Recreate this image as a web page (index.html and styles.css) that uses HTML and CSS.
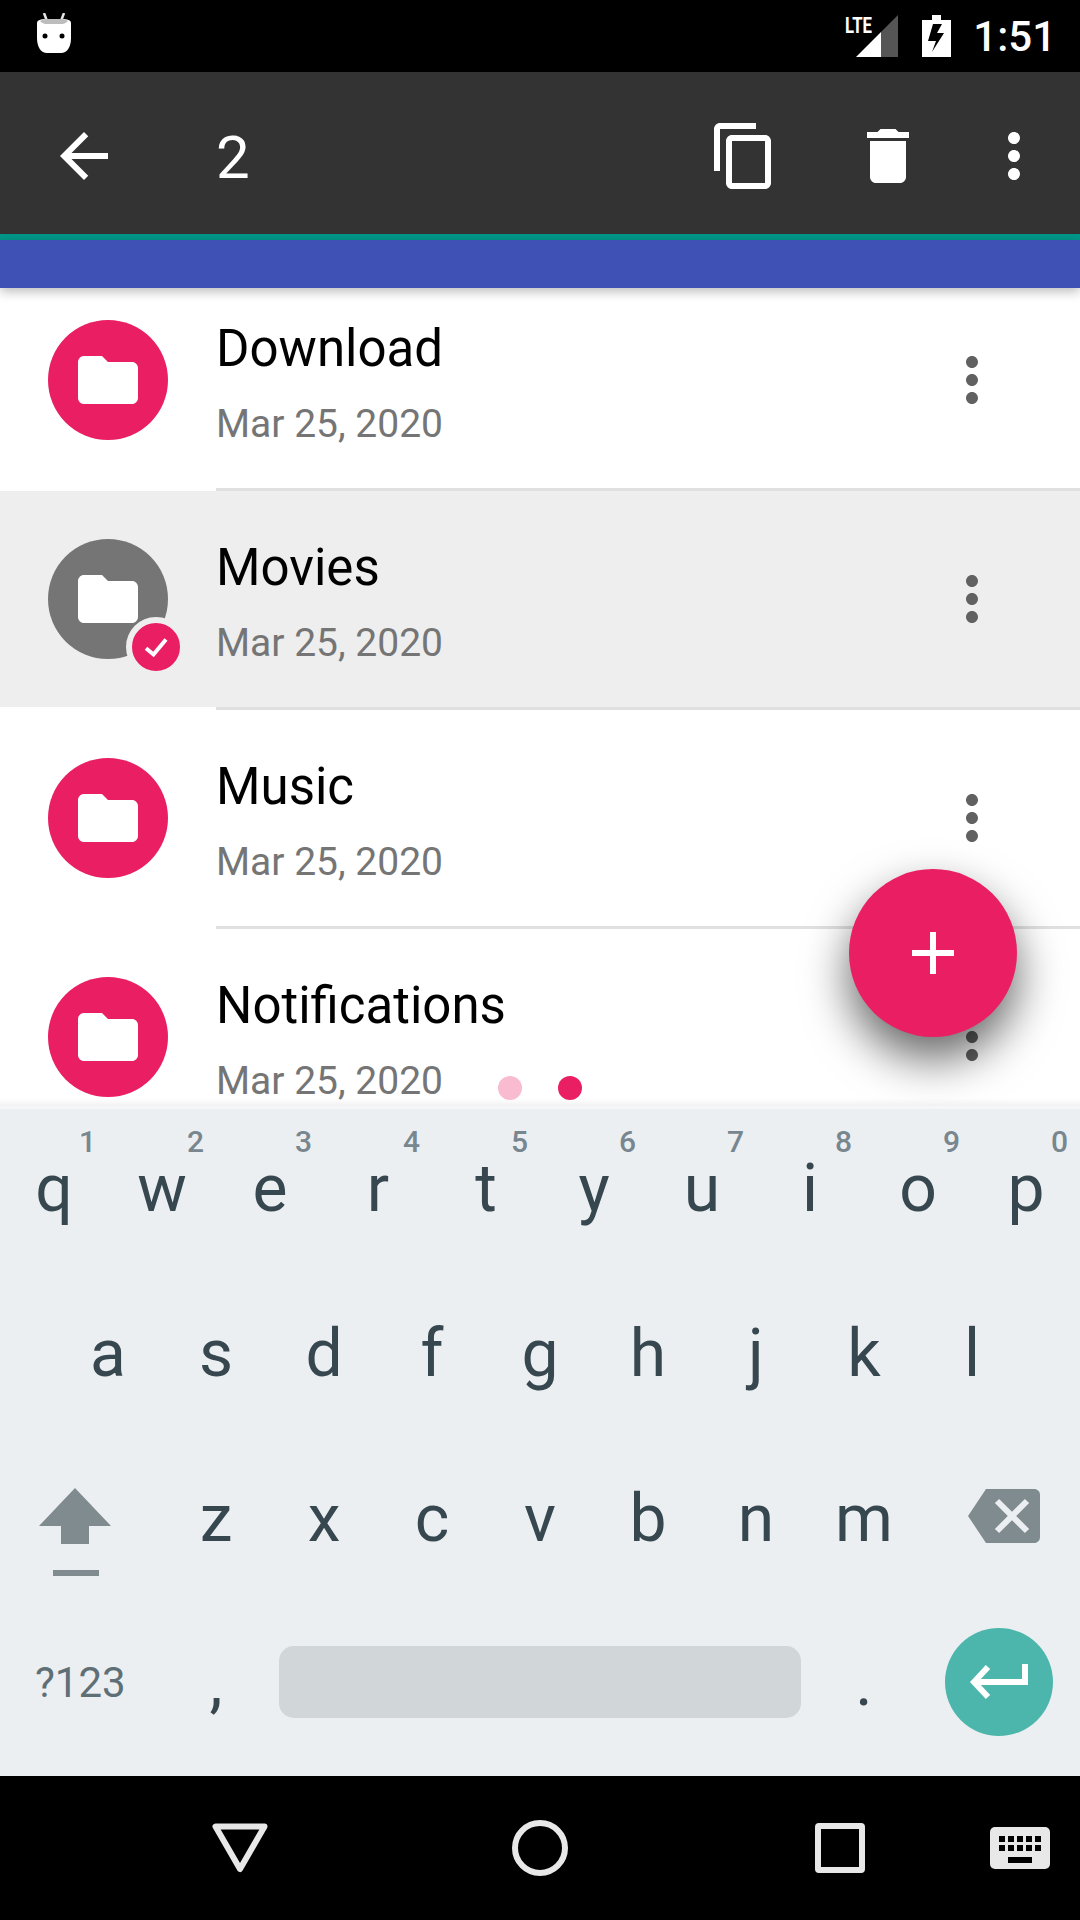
FILE: index.html
```html
<!DOCTYPE html>
<html lang="en">
<head>
<meta charset="utf-8">
<title>Files</title>
<link rel="stylesheet" href="styles.css">
</head>
<body>
<svg class="defs" xmlns="http://www.w3.org/2000/svg">
  <symbol id="folder" viewBox="0 0 24 24"><path d="M10 4H4c-1.1 0-2 .9-2 2v12c0 1.1.9 2 2 2h16c1.1 0 2-.9 2-2V8c0-1.1-.9-2-2-2h-8l-2-2z"/></symbol>
  <symbol id="more" viewBox="0 0 24 24"><path d="M12 8c1.1 0 2-.9 2-2s-.9-2-2-2-2 .9-2 2 .9 2 2 2zm0 2c-1.1 0-2 .9-2 2s.9 2 2 2 2-.9 2-2-.9-2-2-2zm0 6c-1.1 0-2 .9-2 2s.9 2 2 2 2-.9 2-2-.9-2-2-2z"/></symbol>
</svg>
<div class="screen">
  <header class="statusbar">
    <svg class="robot" viewBox="0 0 34 40" width="34" height="40">
      <path class="robot-ant" d="M7 0l3 8M27 0l-3 8"/>
      <path class="robot-body" d="M9 6h16c5 0 9 1 9 4v15c0 9-4 15-10 15H10C4 40 0 34 0 25V10c0-3 4-4 9-4z"/>
      <path class="robot-top" d="M3 8c2-1.500 5-2 7-2h14c2 0 5 .5 7 2-2 2.500-5 3-7 3H10c-2 0-5-.5-7-3z"/>
      <circle class="robot-eye" cx="8" cy="23" r="2.500"/>
      <circle class="robot-eye" cx="25" cy="23" r="2.500"/>
    </svg>
    <div class="status-right">
      <svg class="signal" viewBox="0 0 54 42" width="54" height="42">
        <path class="sig-on" d="M0 42L25 17V42z"/>
        <path class="sig-off" d="M25 17L42 0V42H25z"/>
        <text class="lte" x="-11" y="18" textLength="27" lengthAdjust="spacingAndGlyphs">LTE</text>
      </svg>
      <svg class="battery" viewBox="0 0 29 42" width="29" height="42">
        <path class="batt" d="M10 0h9v5h10v37H0V5h10z"/>
        <path class="bolt" d="M11 9h9l-5 9h7L10 37l4-11H6z"/>
      </svg>
      <span class="clock">1:51</span>
    </div>
  </header>

  <div class="actionbar">
    <svg class="ab-icon ab-back" viewBox="0 0 24 24"><path d="M20 11H7.830l5.590-5.590L12 4l-8 8 8 8 1.410-1.410L7.830 13H20v-2z"/></svg>
    <span class="ab-count">2</span>
    <svg class="ab-icon ab-copy" viewBox="0 0 24 24"><path d="M16 1H4c-1.100 0-2 .9-2 2v14h2V3h12V1zm3 4H8c-1.100 0-2 .9-2 2v14c0 1.100.9 2 2 2h11c1.100 0 2-.9 2-2V7c0-1.100-.9-2-2-2zm0 16H8V7h11v14z"/></svg>
    <svg class="ab-icon ab-trash" viewBox="0 0 24 24"><path d="M6 19c0 1.100.9 2 2 2h8c1.100 0 2-.9 2-2V7H6v12zM19 4h-3.500l-1-1h-5l-1 1H5v2h14V4z"/></svg>
    <svg class="ab-icon ab-more"><use href="#more"/></svg>
  </div>
  <div class="bluebar"></div>

  <main class="list">
    <div class="row">
      <div class="row-body">
        <div class="avatar"><svg class="folder"><use href="#folder"/></svg></div>
        <div class="row-text"><div class="title">Download</div><div class="date">Mar 25, 2020</div></div>
        <svg class="row-more"><use href="#more"/></svg>
      </div>
      <div class="divider"></div>
    </div>
    <div class="row">
      <div class="row-body selected">
        <div class="avatar avatar-sel">
          <svg class="folder"><use href="#folder"/></svg>
          <span class="badge"><svg class="check" viewBox="0 0 24 24"><path d="M4 13l6 5L20 6"/></svg></span>
        </div>
        <div class="row-text"><div class="title">Movies</div><div class="date">Mar 25, 2020</div></div>
        <svg class="row-more"><use href="#more"/></svg>
      </div>
      <div class="divider"></div>
    </div>
    <div class="row">
      <div class="row-body">
        <div class="avatar"><svg class="folder"><use href="#folder"/></svg></div>
        <div class="row-text"><div class="title">Music</div><div class="date">Mar 25, 2020</div></div>
        <svg class="row-more"><use href="#more"/></svg>
      </div>
      <div class="divider"></div>
    </div>
    <div class="row">
      <div class="row-body">
        <div class="avatar"><svg class="folder"><use href="#folder"/></svg></div>
        <div class="row-text"><div class="title">Notifications</div><div class="date">Mar 25, 2020</div></div>
        <svg class="row-more"><use href="#more"/></svg>
      </div>
    </div>
    <div class="fade"></div>
  </main>

  <span class="dot dot-a"></span>
  <span class="dot dot-b"></span>
  <button class="fab"><svg class="plus" viewBox="0 0 42 42"><path d="M18 0h6v18h18v6H24v18h-6V24H0v-6h18z"/></svg></button>

  <section class="keyboard">
    <div class="kb-row kb-row1">
      <div class="key">q<sup class="hint">1</sup></div>
      <div class="key">w<sup class="hint">2</sup></div>
      <div class="key">e<sup class="hint">3</sup></div>
      <div class="key">r<sup class="hint">4</sup></div>
      <div class="key">t<sup class="hint">5</sup></div>
      <div class="key">y<sup class="hint">6</sup></div>
      <div class="key">u<sup class="hint">7</sup></div>
      <div class="key">i<sup class="hint">8</sup></div>
      <div class="key">o<sup class="hint">9</sup></div>
      <div class="key">p<sup class="hint">0</sup></div>
    </div>
    <div class="kb-row kb-row2">
      <div class="key">a</div><div class="key">s</div><div class="key">d</div><div class="key">f</div><div class="key">g</div><div class="key">h</div><div class="key">j</div><div class="key">k</div><div class="key">l</div>
    </div>
    <div class="kb-row kb-row3">
      <div class="key-wide">
        <svg class="shift" viewBox="0 0 72 88" width="72" height="88">
          <path class="kb-ico" d="M36 0l36 38H50v18H22V38H0z"/>
          <rect class="kb-line" x="14" y="82" width="46" height="6"/>
        </svg>
      </div>
      <div class="key">z</div><div class="key">x</div><div class="key">c</div><div class="key">v</div><div class="key">b</div><div class="key">n</div><div class="key">m</div>
      <div class="key-back">
        <svg class="backspace" viewBox="0 0 72 54" width="72" height="54">
          <path class="kb-ico" d="M18 0h48c3.500 0 6 2.500 6 6v42c0 3.500-2.500 6-6 6H18L0 27z"/>
          <path class="kb-x" d="M29 12l30 30M59 12L29 42"/>
        </svg>
      </div>
    </div>
    <div class="kb-row kb-row4">
      <div class="key-sym">?123</div>
      <div class="key">,</div>
      <div class="spacebar"></div>
      <div class="key">.</div>
      <div class="enter">
        <svg class="enter-ico" viewBox="0 0 58 36" width="58" height="36">
          <path d="M55 0v18H4M18 3L4 18l14 15"/>
        </svg>
      </div>
    </div>
  </section>

  <nav class="navbar">
    <div class="nav-slot">
      <svg viewBox="0 0 56 50" width="56" height="50"><path class="nav-stroke" d="M3.500 3.500h49L28 46z"/></svg>
    </div>
    <div class="nav-slot">
      <svg viewBox="0 0 56 56" width="56" height="56"><circle class="nav-stroke" cx="28" cy="28" r="25"/></svg>
    </div>
    <div class="nav-slot">
      <svg viewBox="0 0 50 50" width="50" height="50"><rect class="nav-stroke" x="3" y="3" width="44" height="44" rx="1"/></svg>
    </div>
    <div class="nav-kbd">
      <svg viewBox="0 0 60 42" width="60" height="42">
        <rect class="kbd-body" width="60" height="42" rx="5"/>
        <g class="kbd-keys">
          <rect x="9" y="9" width="6" height="6"/><rect x="18" y="9" width="6" height="6"/><rect x="27" y="9" width="6" height="6"/><rect x="36" y="9" width="6" height="6"/><rect x="45" y="9" width="6" height="6"/>
          <rect x="9" y="18" width="6" height="6"/><rect x="18" y="18" width="6" height="6"/><rect x="27" y="18" width="6" height="6"/><rect x="36" y="18" width="6" height="6"/><rect x="45" y="18" width="6" height="6"/>
          <rect x="18" y="30" width="24" height="6"/>
        </g>
      </svg>
    </div>
  </nav>
</div>
</body>
</html>
```
FILE: styles.css
```css
* { box-sizing: border-box; }
html, body { margin: 0; padding: 0; }
body { width: 1080px; height: 1920px; overflow: hidden; font-family: Roboto, "Liberation Sans", sans-serif; background: #fff; }
.defs { display: none; }
.screen { position: relative; width: 1080px; height: 1920px; display: flex; flex-direction: column; overflow: hidden; }

/* status bar */
.statusbar { flex: 0 0 72px; background: #000; display: flex; align-items: flex-start; justify-content: space-between; padding: 13px 24px 0 37px; }
.robot { display: block; }
.robot-ant { stroke: #e6e6e6; stroke-width: 2.500; fill: none; }
.robot-body { fill: #fff; }
.robot-top { fill: #bdbdbd; }
.robot-eye { fill: #000; }
.status-right { display: flex; align-items: flex-start; margin-top: 2px; }
.signal { display: block; overflow: visible; margin-right: 12px; }
.sig-on { fill: #fff; }
.sig-off { fill: #555; }
.lte { fill: #fff; font: 700 22px Roboto, sans-serif; }
.battery { display: block; margin-right: 22px; }
.batt { fill: #fff; }
.bolt { fill: #000; }
.clock { color: #fff; font-size: 42px; font-weight: 500; line-height: 42px; margin-top: 1px; }

/* action bar */
.actionbar { flex: 0 0 168px; background: #333; border-bottom: 6px solid #009688; display: flex; align-items: flex-start; padding: 48px 30px 0 48px; color: #fff; }
.ab-icon { width: 72px; height: 72px; fill: #fff; flex: none; display: block; }
.ab-count { font-size: 60px; line-height: 76px; margin-left: 96px; }
.ab-copy { margin-left: auto; }
.ab-trash { margin-left: 72px; }
.ab-more { margin-left: 54px; }
.bluebar { flex: 0 0 48px; background: #3f51b5; box-shadow: 0 4px 10px rgba(0,0,0,.25); position: relative; z-index: 2; }

/* list */
.list { flex: 1; min-height: 0; overflow: hidden; position: relative; background: #fff; }
.row:first-child { margin-top: -16px; }
.row-body { height: 216px; display: flex; align-items: center; padding-left: 48px; }
.selected { background: #eee; }
.divider { height: 3px; margin-left: 216px; background: #e0e0e0; }
.avatar { width: 120px; height: 120px; border-radius: 50%; background: #e91e63; position: relative; display: flex; align-items: center; justify-content: center; flex: none; }
.avatar-sel { background: #757575; }
.folder { width: 72px; height: 72px; fill: #fff; display: block; }
.badge { position: absolute; left: 78px; top: 78px; width: 60px; height: 60px; border-radius: 50%; background: #e91e63; border: 6px solid #eee; display: flex; align-items: center; justify-content: center; }
.check { width: 30px; height: 30px; fill: none; stroke: #fff; stroke-width: 3.200; }
.row-text { margin-left: 48px; flex: 1; padding-top: 6px; }
.title { font-size: 51px; line-height: 60px; color: #000; }
.date { font-size: 39px; line-height: 48px; color: #757575; margin-top: 21px; }
.row-more { width: 72px; height: 72px; fill: #616161; flex: none; margin-right: 72px; display: block; }
.fade { position: absolute; left: 0; right: 0; bottom: 0; height: 8px; background: linear-gradient(rgba(0,0,0,0), rgba(0,0,0,.05)); }

/* overlays */
.dot { position: absolute; width: 24px; height: 24px; border-radius: 50%; top: 1076px; z-index: 3; }
.dot-a { left: 498px; background: #f8bbd0; }
.dot-b { left: 558px; background: #e91e63; }
.fab { position: absolute; left: 849px; top: 869px; width: 168px; height: 168px; border-radius: 50%; border: 0; padding: 0; background: #e91e63; box-shadow: 0 22px 46px rgba(0,0,0,.6); display: flex; align-items: center; justify-content: center; z-index: 3; }
.plus { width: 42px; height: 42px; fill: #fff; display: block; }

/* keyboard */
.keyboard { flex: 0 0 670px; background: #eceff1; border-top: 3px solid #f4f6f8; position: relative; z-index: 4; }
.kb-row { display: flex; height: 165px; }
.kb-row1 { margin-top: -3px; }
.kb-row2 { padding-left: 54px; }
.kb-row4 { height: 162px; }
.key { width: 108px; flex: none; position: relative; display: flex; align-items: center; justify-content: center; font-size: 66px; color: #37474f; }
.hint { position: absolute; right: 12px; top: 18px; font-size: 30px; line-height: 36px; font-weight: 500; color: #78868f; vertical-align: baseline; }
.key-wide { width: 162px; flex: none; padding-left: 39px; padding-top: 52px; }
.shift { display: block; }
.kb-ico { fill: #7f8b8f; }
.kb-line { fill: #7f8b8f; }
.kb-x { stroke: #eceff1; stroke-width: 6; fill: none; }
.key-back { flex: none; padding-left: 50px; padding-top: 53px; }
.backspace { display: block; }
.key-sym { width: 162px; flex: none; display: flex; align-items: center; padding-left: 35px; font-size: 42px; color: #5f6f76; }
.spacebar { flex: none; width: 522px; height: 72px; align-self: center; margin: 0 9px; border-radius: 15px; background: #d1d6d9; }
.enter { flex: none; width: 108px; height: 108px; border-radius: 50%; align-self: center; margin-left: 27px; background: #4db6ac; display: flex; align-items: center; justify-content: center; }
.enter-ico { display: block; fill: none; stroke: #fff; stroke-width: 6; }

/* nav bar */
.navbar { flex: 0 0 144px; background: #000; display: flex; align-items: center; padding-left: 90px; }
.nav-slot { width: 300px; flex: none; display: flex; justify-content: center; }
.nav-slot svg, .nav-kbd svg { display: block; }
.nav-kbd { flex: none; width: 60px; }
.nav-stroke { fill: none; stroke: #e8e8e8; stroke-width: 6; stroke-linejoin: round; }
.kbd-body { fill: #e8e8e8; }
.kbd-keys { fill: #000; }
```
